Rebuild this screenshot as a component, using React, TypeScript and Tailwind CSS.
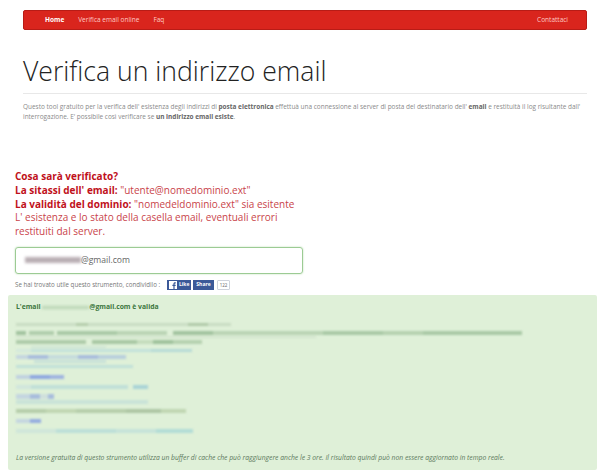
import React from 'react';

type LogRow = { gap: string; h: string; parts: [string, string][] };

// blurred log rows: top gap, height, then segments of width + colour
const logRows: LogRow[] = [
  { gap: 'mt-[11px]', h: 'h-[3px]', parts: [['w-[60px]', 'bg-[#c9dcc3]'], ['w-[12px]', 'bg-[#b4ccab]'], ['w-[100px]', 'bg-[#c9dcc3]'], ['w-[20px]', 'bg-[#b0c9a8]'], ['w-[23px]', 'bg-[#c9dcc3]']] },
  { gap: 'mt-[5px]', h: 'h-[4px]', parts: [['w-[10px]', 'bg-[#a2c39f]'], ['w-[3px]', 'bg-[#dff0d8]'], ['w-[25px]', 'bg-[#b0cdac]'], ['w-[3px]', 'bg-[#dff0d8]'], ['w-[60px]', 'bg-[#a9c9a6]'], ['w-[50px]', 'bg-[#b9d4b4]'], ['w-[6px]', 'bg-[#dff0d8]'], ['w-[40px]', 'bg-[#a2c39f]'], ['w-[110px]', 'bg-[#b9d4b4]'], ['w-[60px]', 'bg-[#a9c9a6]'], ['w-[40px]', 'bg-[#b5d1b0]'], ['w-[99px]', 'bg-[#a9c9a6]']] },
  { gap: 'mt-[1px]', h: 'h-[2px]', parts: [['w-[300px]', 'bg-[#d3e4cd]']] },
  { gap: 'mt-[2px]', h: 'h-[4px]', parts: [['w-[70px]', 'bg-[#aecba9]'], ['w-[6px]', 'bg-[#dff0d8]'], ['w-[45px]', 'bg-[#a8c8a4]'], ['w-[16px]', 'bg-[#c4dcbd]'], ['w-[20px]', 'bg-[#9fc29c]'], ['w-[29px]', 'bg-[#b5d1b0]']] },
  { gap: 'mt-[2px]', h: 'h-[2px]', parts: [['w-[15px]', 'bg-[#dff0d8]'], ['w-[75px]', 'bg-[#cfe5d4]']] },
  { gap: 'mt-[1px]', h: 'h-[3px]', parts: [['w-[15px]', 'bg-[#d3e8dc]'], ['w-[120px]', 'bg-[#c2e1da]'], ['w-[41px]', 'bg-[#b6dad6]']] },
  { gap: 'mt-[3px]', h: 'h-[4px]', parts: [['w-[12px]', 'bg-[#c4d6e0]'], ['w-[20px]', 'bg-[#a8bddc]'], ['w-[30px]', 'bg-[#c4dbdc]'], ['w-[20px]', 'bg-[#a8bddc]'], ['w-[28px]', 'bg-[#b8cfdc]']] },
  { gap: 'mt-[1px]', h: 'h-[3px]', parts: [['w-[18px]', 'bg-[#dff0d8]'], ['w-[72px]', 'bg-[#c7e1d8]']] },
  { gap: 'mt-[2px]', h: 'h-[3px]', parts: [['w-[117px]', 'bg-[#c0e0d8]']] },
  { gap: 'mt-[7px]', h: 'h-[4px]', parts: [['w-[14px]', 'bg-[#c0d2e0]'], ['w-[20px]', 'bg-[#8fa8e0]'], ['w-[14px]', 'bg-[#9fb4e0]']] },
  { gap: 'mt-[6px]', h: 'h-[4px]', parts: [['w-[15px]', 'bg-[#d0e6dc]'], ['w-[97px]', 'bg-[#c0e0d8]'], ['w-[5px]', 'bg-[#dff0d8]'], ['w-[15px]', 'bg-[#a9d4d6]']] },
  { gap: 'mt-[5px]', h: 'h-[5px]', parts: [['w-[14px]', 'bg-[#c4d6e0]'], ['w-[10px]', 'bg-[#a8bddc]'], ['w-[8px]', 'bg-[#cfe0dc]'], ['w-[6px]', 'bg-[#a8bddc]']] },
  { gap: 'mt-[1px]', h: 'h-[4px]', parts: [['w-[132px]', 'bg-[#c9e3d8]']] },
  { gap: 'mt-[5px]', h: 'h-[4px]', parts: [['w-[30px]', 'bg-[#b5cdaa]'], ['w-[30px]', 'bg-[#c0d6b2]'], ['w-[50px]', 'bg-[#b5cdaa]'], ['w-[35px]', 'bg-[#adc6a4]'], ['w-[25px]', 'bg-[#c0d6b2]']] },
  { gap: 'mt-[6px]', h: 'h-[4px]', parts: [['w-[14px]', 'bg-[#c4d6e0]'], ['w-[11px]', 'bg-[#95ade0]']] },
  { gap: 'mt-[6px]', h: 'h-[4px]', parts: [['w-[40px]', 'bg-[#cfe6da]'], ['w-[60px]', 'bg-[#bcdfd8]'], ['w-[40px]', 'bg-[#c6e3d9]'], ['w-[37px]', 'bg-[#b2dcd6]']] },
];

function BlurredName({ className }: { className: string }) {
  return <span className={`inline-block align-middle blur-[1.5px] ${className}`} />;
}

export default function App() {
  return (
    <div className="w-[610px] h-[474px] overflow-hidden bg-white font-['Open_Sans','Liberation_Sans',sans-serif]">
      {/* Navbar */}
      <div className="mx-[23px] mt-[10px] h-[20px] flex items-center justify-between bg-[#d9251d] border border-[#b81c16] rounded-[2px] pl-[21px] pr-[13px] text-[6.5px] text-[#ffc9c4]">
        <div className="flex items-center gap-[14px]">
          <span className="font-bold text-white">Home</span>
          <span>Verifica email online</span>
          <span>Faq</span>
        </div>
        <span className="mr-[5px]">Contattaci</span>
      </div>

      {/* Title */}
      <div className="mx-[23px]">
        <h1 className="mt-[21px] text-[26.6px] leading-[40px] font-light text-[#222]">Verifica un indirizzo email</h1>
        <div className="mt-[2px] border-t border-[#e8e8e8]" />
        <p className="mt-[8px] text-[6.45px] leading-[10px] text-[#8a8a8a]">
          Questo tool gratuito per la verifica dell' esistenza degli indirizzi di <b className="text-[#666]">posta elettronica</b> effettuà una connessione al server di posta del destinatario dell' <b className="text-[#666]">email</b> e restituità il log risultante dall' interrogazione. E' possibile così verificare se <b className="text-[#666]">un indirizzo email esiste</b>.
        </p>
      </div>

      {/* Info */}
      <div className="mt-[48px] ml-[15px] w-[300px] text-[10px] leading-[13.8px] text-[#c9434a]">
        <p className="font-bold text-[#bf111b]">Cosa sarà verificato?</p>
        <p><b className="text-[#bf111b]">La sitassi dell' email:</b> "utente@nomedominio.ext"</p>
        <p><b className="text-[#bf111b]">La validità del dominio:</b> "nomedeldominio.ext" sia esitente</p>
        <p className="w-[275px]">L' esistenza e lo stato della casella email, eventuali errori restituiti dal server.</p>
      </div>

      {/* Input */}
      <div className="mt-[8px] ml-[15px] w-[288px] h-[27px] flex items-center border-[1.5px] border-[#9ccb94] rounded-[3px] shadow-[0_0_2px_#b7dcb0] pl-[9px] text-[8.6px] text-[#666]">
        <BlurredName className="w-[56px] h-[6px] bg-[#b9aeb4]" />
        <span>@gmail.com</span>
      </div>

      {/* Share */}
      <div className="mt-[6px] ml-[15px] h-[10px] flex items-center text-[6.2px] text-[#777]">
        <span className="w-[152px] whitespace-nowrap">Se hai trovato utile questo strumento, condividilo :</span>
        <span className="h-[10px] w-[24px] flex items-center gap-[2px] pl-[2px] bg-[#3b5998] text-[5px] font-bold text-white">
          <svg viewBox="0 0 8 8" className="w-[8px] h-[8px]">
            <rect width="8" height="8" fill="#fff" />
            <path d="M5.6 8V5h1l.2-1.2H5.6V3c0-.4.1-.6.6-.6h.6V1.3C6.6 1.3 6.3 1.2 5.9 1.2 5 1.2 4.4 1.8 4.4 2.8v1H3.4V5h1v3z" fill="#3b5998" />
          </svg>
          Like
        </span>
        <span className="ml-[2px] h-[10px] w-[21px] flex items-center justify-center bg-[#3b5998] text-[5px] font-bold text-white">Share</span>
        <span className="ml-[3px] h-[10px] w-[13px] flex items-center justify-center border border-[#cfd3dc] rounded-[1px] text-[4.5px] text-[#666]">122</span>
      </div>

      {/* Result */}
      <div className="mt-[5px] ml-[8px] w-[589px] h-[175px] bg-[#dff0d8] rounded-[2px] pl-[8px] pt-[7px] flex flex-col">
        <p className="text-[6.8px] leading-[10px] font-bold text-[#3c763d]">
          L'email <BlurredName className="w-[47px] h-[3px] bg-[#b9d4b4]" />@gmail.com è valida
        </p>
        <div className="flex flex-col blur-[0.8px]">
          {logRows.map((row, i) => (
            <div key={i} className={`flex ${row.gap} ${row.h}`}>
              {row.parts.map(([w, color], j) => (
                <div key={j} className={`${w} ${color}`} />
              ))}
            </div>
          ))}
        </div>
        <p className="mt-auto mb-[7px] text-[6.75px] leading-[10px] italic text-[#5d7a5d]">
          La versione gratuita di questo strumento utilizza un buffer di cache che può raggiungere anche le 3 ore. Il risultato quindi può non essere aggiornato in tempo reale.
        </p>
      </div>
    </div>
  );
}
